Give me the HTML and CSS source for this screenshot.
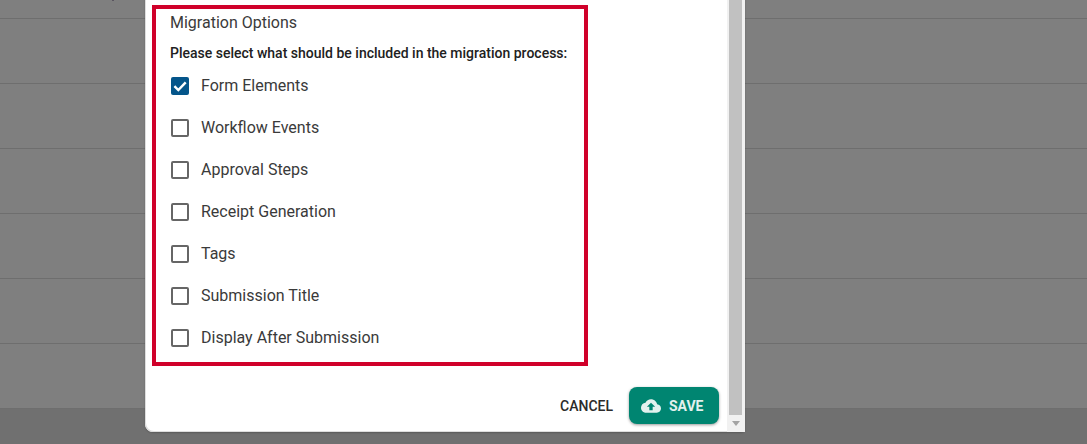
FILE: index.html
```html
<!DOCTYPE html>
<html>
<head>
	<meta charset="utf-8" />
	<title>Migration Options</title>
	<link rel="stylesheet" href="styles.css">
</head>
<body>
	<div class="table-bg">
		<div class="bg-row first"><span class="speck"></span></div>
		<div class="bg-row"></div>
		<div class="bg-row"></div>
		<div class="bg-row"></div>
		<div class="bg-row"></div>
		<div class="bg-row"></div>
		<div class="bg-row"></div>
		<div class="bg-footer"></div>
	</div>

	<div class="modal">
		<div class="modal-body">
			<div class="highlight-box">
				<h2 class="options-title">Migration Options</h2>
				<p class="options-note">Please select what should be included in the migration process:</p>
				<ul class="options-list">
					<li>
						<span class="check checked">
							<svg viewBox="0 0 18 18" width="18" height="18"><path d="M3.4 9.2l3.9 3.9 7.4-7.8" fill="none" stroke="#fff" stroke-width="2.4"/></svg>
						</span>
						Form Elements
					</li>
					<li><span class="check"></span>Workflow Events</li>
					<li><span class="check"></span>Approval Steps</li>
					<li><span class="check"></span>Receipt Generation</li>
					<li><span class="check"></span>Tags</li>
					<li><span class="check"></span>Submission Title</li>
					<li><span class="check"></span>Display After Submission</li>
				</ul>
			</div>
			<div class="modal-actions">
				<span class="btn-cancel">CANCEL</span>
				<span class="btn-save">
					<svg viewBox="0 0 24 24" width="24" height="24"><path d="M19.35 10.04C18.67 6.59 15.64 4 12 4 9.11 4 6.6 5.64 5.35 8.04 2.34 8.36 0 10.91 0 14c0 3.31 2.69 6 6 6h13c2.76 0 5-2.24 5-5 0-2.64-2.05-4.78-4.65-4.96zM14 13v4h-4v-4H7l5-5 5 5h-3z" fill="#e3f1ee"/></svg>
					SAVE
				</span>
			</div>
		</div>
		<div class="scrollbar">
			<div class="scroll-thumb"></div>
			<div class="scroll-arrow"></div>
		</div>
	</div>
</body>
</html>
```

FILE: styles.css
```css
html, body {
	margin: 0;
	padding: 0;
}
body {
	width: 1087px;
	height: 444px;
	overflow: hidden;
	background-color: #7f7f7f;
	font-family: Roboto, "Liberation Sans", sans-serif;
	color: #212121;
}
.table-bg {
	display: flex;
	flex-direction: column;
	height: 444px;
}
.bg-row {
	flex: none;
	height: 64px;
	border-bottom: 1px solid #6e6e6e;
}
.bg-row.first {
	height: 18px;
	position: relative;
}
.speck {
	position: absolute;
	left: 112px;
	top: 0;
	width: 2px;
	height: 1px;
	background-color: #5a5560;
}
.bg-footer {
	flex: 1;
	background-color: #707070;
}

.modal {
	position: absolute;
	left: 145px;
	top: -10px;
	width: 600px;
	height: 442px;
	display: flex;
	background-color: #fff;
	border-radius: 0 0 4px 8px;
	box-shadow: inset 1px -1px 0 #dedede, 0 1px 2px rgba(0, 0, 0, 0.2);
}
.modal-body {
	flex: 1;
	padding: 15px 0 0 7px;
}
.highlight-box {
	box-sizing: border-box;
	width: 436px;
	height: 361px;
	border: 4px solid #d0002a;
	padding: 0 0 0 14px;
}
.options-title {
	margin: 0;
	padding-top: 1px;
	font-size: 16px;
	font-weight: 400;
	line-height: 26px;
	color: #3a3a3a;
}
.options-note {
	margin: 7px 0 0;
	font-size: 14px;
	font-weight: 500;
	line-height: 20px;
}
.options-list {
	list-style: none;
	margin: 1px 0 0;
	padding: 0;
}
.options-list li {
	display: flex;
	align-items: center;
	height: 42px;
	padding-left: 1px;
	font-size: 16px;
	color: #3a3a3a;
}
.check {
	box-sizing: border-box;
	flex: none;
	width: 18px;
	height: 18px;
	margin-top: 2px;
	margin-right: 12px;
	border: 2px solid #666;
	border-radius: 2px;
}
.check.checked {
	border: 0;
	background-color: #04558a;
}
.check svg {
	display: block;
}
.modal-actions {
	display: flex;
	align-items: center;
	justify-content: flex-end;
	gap: 16px;
	margin-top: 21px;
	padding-right: 8px;
}
.btn-cancel {
	font-size: 14px;
	font-weight: 500;
	color: #2b2b2b;
}
.btn-save {
	display: flex;
	align-items: center;
	gap: 8px;
	box-sizing: border-box;
	width: 90px;
	height: 37px;
	padding-left: 12px;
	border-radius: 8px;
	background-color: #008571;
	color: #e3f1ee;
	font-size: 14px;
	font-weight: 700;
	box-shadow: 0 1px 3px rgba(0, 0, 0, 0.4);
}
.btn-save svg {
	width: 20px;
	height: 20px;
}
.scrollbar {
	flex: none;
	display: flex;
	flex-direction: column;
	box-sizing: border-box;
	width: 18px;
	padding: 0 3px 0 2px;
	background-color: #f1f1f1;
}
.scroll-thumb {
	flex: 1;
	background-color: #c1c1c1;
}
.scroll-arrow {
	flex: none;
	position: relative;
	height: 17px;
}
.scroll-arrow::after {
	content: "";
	position: absolute;
	left: 3px;
	top: 6px;
	border-left: 4px solid transparent;
	border-right: 4px solid transparent;
	border-top: 5px solid #a3a3a3;
}
```
